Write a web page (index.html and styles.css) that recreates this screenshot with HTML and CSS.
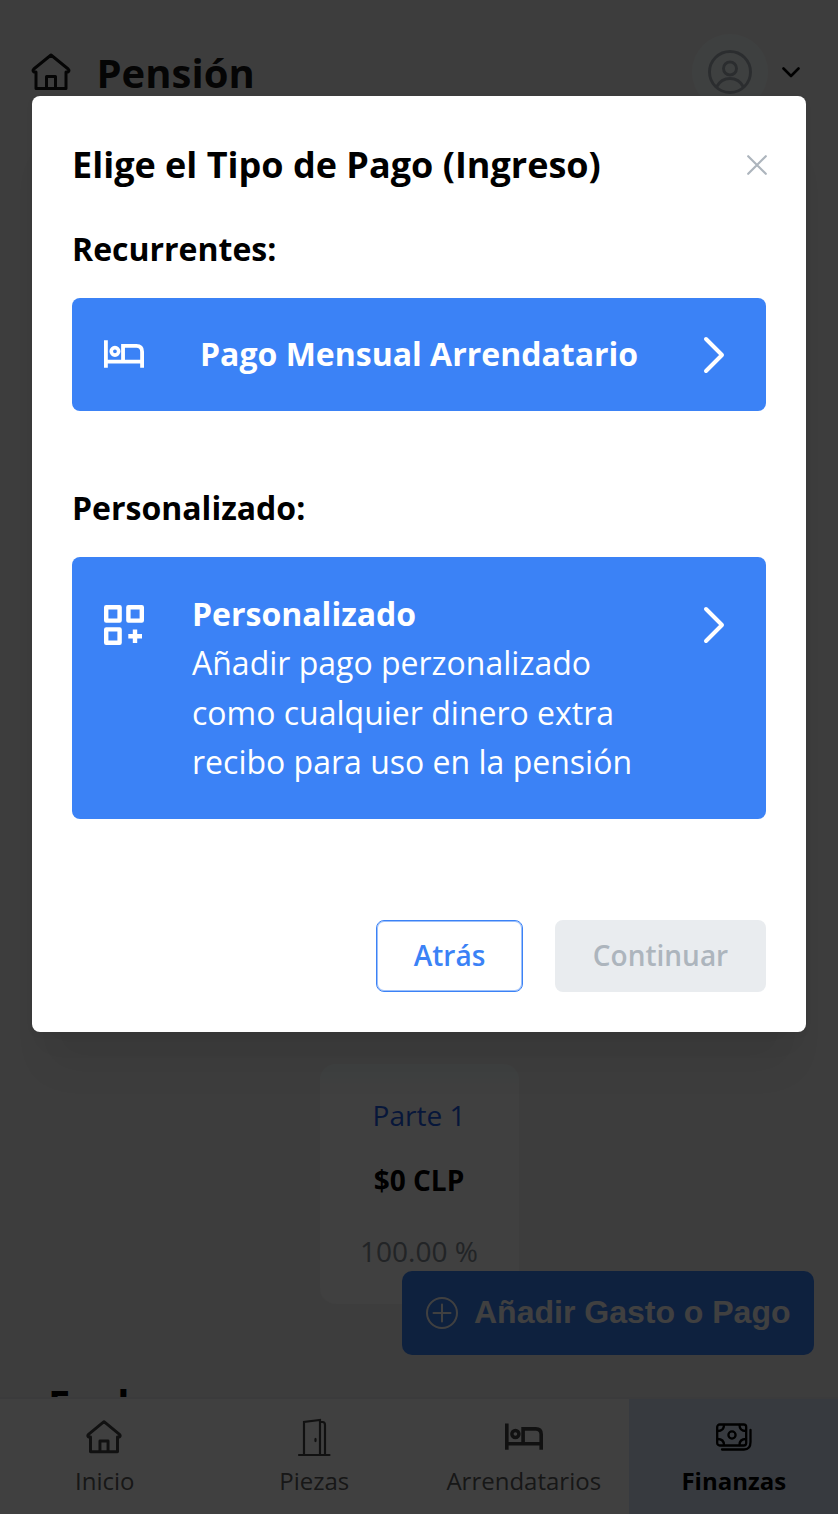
FILE: index.html
```html
<!DOCTYPE html>
<html lang="es">
<head>
<meta charset="utf-8">
<title>Pensión</title>
<link rel="stylesheet" href="styles.css">
</head>
<body>
<svg class="sprite" aria-hidden="true">
  <symbol id="house" viewBox="0 0 40 38"><path d="M5 19H2.800Q1.200 17.500 2.800 16L20 2 37.200 16Q38.800 17.500 37.200 19H35V35.500H5ZM15.500 35V23.500H24.500V35" fill="none" stroke="currentColor" stroke-linejoin="round"/></symbol>
  <symbol id="bed" viewBox="0 0 42 30"><path d="M2 0V29M2 22.500H40M20 22V6H34Q40 6 40 12V29" fill="none" stroke="currentColor" stroke-width="4"/><circle cx="11.500" cy="11.700" r="3.900" fill="none" stroke="currentColor" stroke-width="3.800"/></symbol>
  <symbol id="chevron" viewBox="0 0 24 40"><path d="M4 4 20 20 4 36" fill="none" stroke="currentColor" stroke-width="4" stroke-linecap="round" stroke-linejoin="round"/></symbol>
</svg>
<div class="app">
  <header class="header">
    <div class="brand"><svg class="brand-icon"><use href="#house"/></svg><h1 class="brand-title">Pensión</h1></div>
    <div class="user">
      <span class="avatar"><svg class="avatar-icon" viewBox="0 0 44 46" fill="none" stroke="currentColor" stroke-width="3"><circle cx="22" cy="23" r="20.500"/><circle cx="22" cy="19.500" r="6.500"/><path d="M8.500 38Q13 29.500 22 29.500T35.500 38"/></svg></span>
      <svg class="user-arrow" viewBox="0 0 18 11"><path d="M1.500 1.500 9 9 16.500 1.500" fill="none" stroke="currentColor" stroke-width="2.600" stroke-linecap="round" stroke-linejoin="round"/></svg>
    </div>
  </header>
  <main class="content">
    <section class="share">
      <span class="share-name">Parte 1</span>
      <strong class="share-amount">$0 CLP</strong>
      <span class="share-percent">100.00 %</span>
    </section>
    <h2 class="section-title">Fecha</h2>
  </main>
  <button class="fab"><svg class="fab-icon" viewBox="0 0 34 34" fill="none" stroke="currentColor" stroke-width="2"><circle cx="17" cy="17" r="15"/><path d="M17 8.500V25.500M8.500 17H25.500" stroke-linecap="round"/></svg><span class="fab-label">Añadir Gasto o Pago</span></button>
  <nav class="tabs">
    <a class="tab"><svg class="tab-icon tab-house"><use href="#house"/></svg><span>Inicio</span></a>
    <a class="tab"><svg class="tab-icon" viewBox="0 0 36 40" fill="none" stroke="currentColor" stroke-width="2.200"><path d="M3 38H33.500M8 37V5L24 3V37M25 5H26.500Q29 5 29 8V37" stroke-linecap="round"/><ellipse cx="19.500" cy="23" rx="1.200" ry="2.200" fill="currentColor" stroke="none"/></svg><span>Piezas</span></a>
    <a class="tab"><svg class="tab-icon tab-bed"><use href="#bed"/></svg><span>Arrendatarios</span></a>
    <a class="tab tab-active"><svg class="tab-icon tab-cash" viewBox="0 0 36 28" fill="none" stroke="currentColor" stroke-width="2.300"><rect x="1.200" y="1.500" width="29" height="21" rx="2.500"/><circle cx="16" cy="12" r="3.600"/><path d="M8 2Q8 8 1.500 8M23.500 2Q23.500 8 30 8M8 22Q8 16 1.500 16M23.500 22Q23.500 16 30 16M34.500 7V19Q34.500 26.500 28 26.500H6" stroke-linecap="round"/></svg><span>Finanzas</span></a>
  </nav>
</div>
<div class="overlay">
  <section class="modal" role="dialog" aria-modal="true">
    <header class="modal-header">
      <h2 class="modal-title">Elige el Tipo de Pago (Ingreso)</h2>
      <svg class="close" viewBox="0 0 20 20"><path d="M1.200 1.200 18.800 18.800M18.800 1.200 1.200 18.800" fill="none" stroke="currentColor" stroke-width="2.200" stroke-linecap="round"/></svg>
    </header>
    <h3 class="group-title">Recurrentes:</h3>
    <button class="option option-simple"><svg class="option-bed"><use href="#bed"/></svg><strong class="option-label">Pago Mensual Arrendatario</strong><svg class="option-arrow"><use href="#chevron"/></svg></button>
    <h3 class="group-title group-custom">Personalizado:</h3>
    <button class="option option-custom">
      <svg class="option-grid" viewBox="0 0 40 40" fill="none" stroke="currentColor" stroke-width="4.400"><g stroke-linejoin="round"><rect x="2.200" y="2.200" width="13.400" height="13.400"/><rect x="24.400" y="2.200" width="13.400" height="13.400"/><rect x="2.200" y="24.400" width="13.400" height="13.400"/></g><path d="M31 24.500V38M24.300 31.200H38"/></svg>
      <span class="option-text"><strong>Personalizado</strong><br>Añadir pago perzonalizado<br>como cualquier dinero extra<br>recibo para uso en la pensión</span>
      <svg class="option-arrow"><use href="#chevron"/></svg>
    </button>
    <footer class="actions"><button class="action action-back">Atrás</button><button class="action action-next" disabled>Continuar</button></footer>
  </section>
</div>
</body>
</html>
```
FILE: styles.css
```css
* { box-sizing: border-box; }
body { margin: 0; height: 1514px; overflow: hidden; font-family: "Open Sans", sans-serif; color: #000; background: #f4f4f4; }
h1, h2, h3 { margin: 0; }
button { border: 0; font-family: inherit; text-align: left; }
svg { display: block; flex: none; }
.sprite { position: absolute; width: 0; height: 0; }
.app { height: 1514px; overflow: hidden; }
.header { height: 144px; padding: 0 33px 0 31px; display: flex; align-items: center; justify-content: space-between; }
.brand { display: flex; align-items: center; gap: 25.500px; color: #171717; }
.brand-icon { width: 40px; height: 38px; stroke-width: 3px; }
.brand-title { padding-top: 2px; font-size: 40px; line-height: 56px; font-weight: 700; }
.user { display: flex; align-items: center; gap: 14px; padding-right: 5px; }
.avatar { width: 76px; height: 76px; border-radius: 50%; background: #f8ffff; color: #adb5bd; display: flex; align-items: center; justify-content: center; }
.avatar-icon { width: 44px; height: 46px; }
.user-arrow { width: 18px; height: 11px; }
.content { height: 1253px; padding-top: 920px; overflow: hidden; display: flex; flex-direction: column; align-items: center; }
.share { flex: none; width: 199px; height: 240px; border-radius: 16px; background: linear-gradient(#f8ffff, #f8ffff 14px, #fdfdfd 20px); display: flex; flex-direction: column; align-items: center; font-size: 28px; line-height: 40px; padding-top: 31px; }
.share-name { color: #1f5be6; }
.share-amount { margin-top: 25px; font-weight: 700; }
.share-percent { margin-top: 31px; color: #868e96; }
.section-title { align-self: flex-start; flex: none; margin: 72px 0 0 48px; font-size: 40px; line-height: 56px; letter-spacing: 1px; }
.fab { position: absolute; left: 402px; top: 1271px; width: 412px; height: 84px; border-radius: 10px; background: #3b82f6; color: #fff; display: flex; align-items: center; gap: 15px; padding: 0 0 0 23px; font: 700 32px "Liberation Sans", Arial, sans-serif; white-space: nowrap; }
.fab-icon { width: 34px; height: 34px; }
.fab-label { padding-bottom: 2px; }
.tabs { height: 117px; border-top: 2px solid #e9ecef; background: #fff; display: grid; grid-template-columns: repeat(4, 1fr); }
.tab { display: flex; flex-direction: column; align-items: center; padding-top: 18px; font-size: 24px; line-height: 36px; font-weight: 400; color: #5c5c5c; }
.tab-icon { width: 36px; height: 40px; margin-bottom: 6px; color: #454545; }
.tab-house { margin-right: 1px; stroke-width: 3.300px; }
.tab-bed { width: 38px; }
.tab-active { padding-left: 1px; background: #dce8fa; color: #000; font-weight: 700; }
.tab-cash { color: #000; }
.overlay { position: absolute; inset: 0; background: rgba(0, 0, 0, .75); padding: 96px 32px 0 32px; }
.modal { height: 936px; border-radius: 8px; background: #fff; padding: 40px 40px 0; box-shadow: 0 2px 6px rgba(0,0,0,.05), 0 50px 38px -16px rgba(0,0,0,.05), 0 24px 24px -14px rgba(0,0,0,.04); }
.modal-header { height: 58px; margin-right: -1px; display: flex; align-items: center; justify-content: space-between; }
.modal-title { font-size: 36px; line-height: 56px; font-weight: 700; }
.close { width: 20px; height: 20px; color: #adb5bd; }
.group-title { font-size: 32px; line-height: 48px; font-weight: 700; margin-top: 31px; }
.option { width: 100%; display: flex; border-radius: 8px; background: #3b82f6; color: #fff; font-size: 32px; }
.option-simple { height: 113px; margin-top: 25px; padding: 0 40px 0 32px; align-items: center; }
.option-bed { width: 40px; height: 29px; }
.option-label { flex: 1; padding: 0 0 2px 56px; }
.option-arrow { width: 24px; height: 40px; }
.group-custom { margin-top: 73px; }
.option-custom { height: 262px; margin-top: 25px; padding: 32px 40px 0 32px; align-items: flex-start; }
.option-grid { width: 40px; height: 40px; margin-top: 16px; }
.option-text { flex: 1; padding-left: 48px; line-height: 49.400px; white-space: nowrap; }
.option-custom .option-arrow { margin-top: 16px; }
.actions { display: flex; justify-content: flex-end; gap: 32px; margin-top: 101px; }
.action { height: 72px; border-radius: 8px; font-size: 28px; font-weight: 600; text-align: center; padding: 0 0 2px; }
.action-back { width: 147px; border: 1px solid #3b82f6; box-shadow: inset 0 0 0 1px rgba(59, 130, 246, .5); background: #fff; color: #3b82f6; }
.action-next { width: 211px; background: #e9ecef; color: #adb5bd; }
```
